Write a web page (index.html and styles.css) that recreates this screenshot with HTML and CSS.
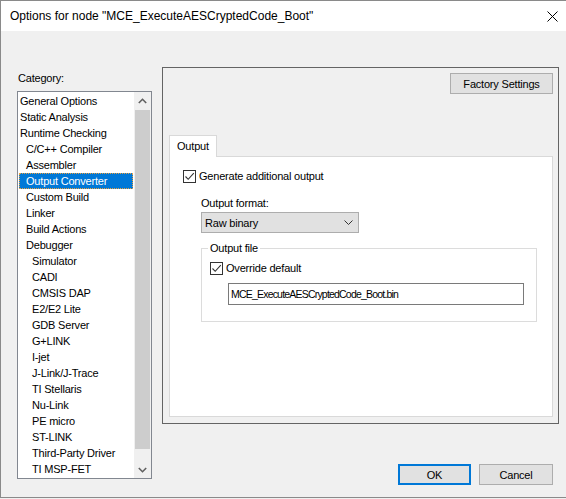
FILE: index.html
```html
<!DOCTYPE html>
<html>
<head>
<meta charset="utf-8">
<link rel="stylesheet" href="styles.css">
</head>
<body>
<div class="window">
  <div class="titlebar">
    <span class="title">Options for node "MCE_ExecuteAESCryptedCode_Boot"</span>
    <svg class="close" width="11" height="11" viewBox="0 0 11 11"><path d="M0.5 0.5 L10.5 10.5 M10.5 0.5 L0.5 10.5" stroke="#000" stroke-width="1" fill="none"/></svg>
  </div>
  <div class="content">
    <div class="leftcol">
      <div class="cat-label">Category:</div>
      <div class="listbox">
        <ul class="items">
          <li class="l0">General Options</li>
          <li class="l0">Static Analysis</li>
          <li class="l0">Runtime Checking</li>
          <li class="l1">C/C++ Compiler</li>
          <li class="l1">Assembler</li>
          <li class="l1 selected">Output Converter</li>
          <li class="l1">Custom Build</li>
          <li class="l1">Linker</li>
          <li class="l1">Build Actions</li>
          <li class="l1">Debugger</li>
          <li class="l2">Simulator</li>
          <li class="l2">CADI</li>
          <li class="l2">CMSIS DAP</li>
          <li class="l2">E2/E2 Lite</li>
          <li class="l2">GDB Server</li>
          <li class="l2">G+LINK</li>
          <li class="l2">I-jet</li>
          <li class="l2">J-Link/J-Trace</li>
          <li class="l2">TI Stellaris</li>
          <li class="l2">Nu-Link</li>
          <li class="l2">PE micro</li>
          <li class="l2">ST-LINK</li>
          <li class="l2">Third-Party Driver</li>
          <li class="l2">TI MSP-FET</li>
        </ul>
        <div class="scrollbar">
          <div class="arrow"><svg width="9" height="6" viewBox="0 0 9 6"><path d="M0.8 5 L4.5 1.3 L8.2 5" stroke="#606060" stroke-width="1.6" fill="none"/></svg></div>
          <div class="track"><div class="thumb"></div></div>
          <div class="arrow"><svg width="9" height="6" viewBox="0 0 9 6"><path d="M0.8 1 L4.5 4.7 L8.2 1" stroke="#606060" stroke-width="1.6" fill="none"/></svg></div>
        </div>
      </div>
    </div>
    <div class="rightcol">
      <div class="panel">
        <div class="panel-top"><div class="btn factory">Factory Settings</div></div>
        <div class="tabs">
          <div class="tabstrip"><div class="tab">Output</div></div>
          <div class="tabpage">
            <div class="check-row first">
              <span class="checkbox"><svg width="11" height="11" viewBox="0 0 11 11"><path d="M1.5 5.5 L4.2 8.3 L9.8 2.2" stroke="#333" stroke-width="1.1" fill="none"/></svg></span>
              <span class="check-label">Generate additional output</span>
            </div>
            <div class="format-label">Output format:</div>
            <div class="select">
              <span>Raw binary</span>
              <svg width="9" height="5" viewBox="0 0 9 5"><path d="M0.5 0.5 L4.5 4.5 L8.5 0.5" stroke="#333" stroke-width="1" fill="none"/></svg>
            </div>
            <div class="group">
              <span class="group-label">Output file</span>
              <div class="check-row inner">
                <span class="checkbox"><svg width="11" height="11" viewBox="0 0 11 11"><path d="M1.5 5.5 L4.2 8.3 L9.8 2.2" stroke="#333" stroke-width="1.1" fill="none"/></svg></span>
                <span class="check-label">Override default</span>
              </div>
              <div class="textbox">MCE_ExecuteAESCryptedCode_Boot.bin</div>
            </div>
          </div>
        </div>
      </div>
      <div class="dialog-buttons">
        <div class="btn ok">OK</div>
        <div class="btn cancel">Cancel</div>
      </div>
    </div>
  </div>
</div>
</body>
</html>
```

FILE: styles.css
```css
html, body {
  margin: 0;
  padding: 0;
}
body {
  width: 566px;
  height: 499px;
  overflow: hidden;
  background: #f0f0f0;
  font-family: "Liberation Sans", Arial, sans-serif;
  font-size: 11px;
  letter-spacing: -0.2px;
  color: #000;
}
.window {
  box-sizing: border-box;
  width: 567px;
  height: 498px;
  border: 1px solid #8a8a8a;
  border-right: none;
  background: #f0f0f0;
}
.titlebar {
  height: 30px;
  background: #fff;
  display: flex;
  align-items: center;
  padding-left: 9px;
  padding-right: 9px;
  justify-content: space-between;
}
.title {
  font-size: 12px;
  letter-spacing: 0;
  color: #000;
}
.close {
  display: block;
}
.content {
  display: flex;
  align-items: flex-start;
  padding-left: 16px;
}
.leftcol {
  margin-top: 40px;
  width: 135px;
}
.cat-label {
  line-height: 14px;
  height: 14px;
  margin-bottom: 6px;
  padding-left: 1px;
}
.listbox {
  box-sizing: border-box;
  width: 135px;
  height: 388px;
  border: 1px solid #828790;
  background: #fff;
  display: flex;
}
.items {
  list-style: none;
  margin: 0;
  padding: 1px 0 0 1px;
  width: 115px;
}
.items li {
  box-sizing: border-box;
  width: 114px;
  height: 16px;
  line-height: 16px;
  white-space: nowrap;
}
.items .l0 { padding-left: 1px; }
.items .l1 { padding-left: 7px; }
.items .l2 { padding-left: 13px; }
.items li.selected {
  background: #0078d7;
  color: #fff;
  outline: 1px dotted #e8a040;
  outline-offset: -1px;
}
.scrollbar {
  width: 17px;
  height: 386px;
  display: flex;
  flex-direction: column;
  background: #f0f0f0;
}
.arrow {
  height: 17px;
  display: flex;
  align-items: center;
  justify-content: center;
}
.arrow svg { display: block; }
.track {
  flex: 1;
  padding: 1px 1px 0 1px;
}
.thumb {
  height: 339px;
  background: #cdcdcd;
}
.rightcol {
  margin-left: 10px;
  margin-top: 36px;
  width: 397px;
}
.panel {
  box-sizing: border-box;
  width: 397px;
  height: 357px;
  border: 1px solid #646464;
}
.panel-top {
  display: flex;
  justify-content: flex-end;
  padding: 5px 5px 0 0;
}
.btn {
  box-sizing: border-box;
  height: 21px;
  border: 1px solid #adadad;
  background: #e1e1e1;
  display: flex;
  align-items: center;
  justify-content: center;
  font-size: 11px;
}
.factory {
  width: 103px;
}
.tabs {
  margin-top: 41px;
  margin-left: 6px;
  width: 384px;
}
.tabstrip {
  display: flex;
  height: 21px;
  position: relative;
  z-index: 1;
}
.tab {
  box-sizing: border-box;
  width: 48px;
  height: 22px;
  border: 1px solid #d9d9d9;
  border-bottom: none;
  background: #fff;
  padding-left: 7px;
  line-height: 20px;
}
.tabpage {
  box-sizing: border-box;
  width: 384px;
  height: 261px;
  border: 1px solid #d9d9d9;
  background: #fff;
  padding-left: 13px;
  padding-top: 13px;
}
.check-row {
  display: flex;
  align-items: center;
  height: 13px;
}
.checkbox {
  box-sizing: border-box;
  width: 13px;
  height: 13px;
  border: 1px solid #333;
  background: #fff;
  display: flex;
  align-items: center;
  justify-content: center;
}
.checkbox svg { display: block; }
.check-label {
  margin-left: 3px;
  line-height: 13px;
}
.format-label {
  margin-top: 13px;
  margin-left: 18px;
  line-height: 14px;
}
.select {
  box-sizing: border-box;
  margin-top: 2px;
  margin-left: 18px;
  width: 158px;
  height: 21px;
  border: 1px solid #adadad;
  background: #e1e1e1;
  display: flex;
  align-items: center;
  justify-content: space-between;
  padding-left: 3px;
  padding-right: 5px;
}
.select svg { display: block; }
.group {
  box-sizing: border-box;
  position: relative;
  margin-top: 15px;
  margin-left: 18px;
  width: 336px;
  height: 74px;
  border: 1px solid #dcdcdc;
  padding-left: 8px;
  padding-top: 13px;
}
.group-label {
  position: absolute;
  left: 6px;
  top: -8px;
  background: #fff;
  padding: 0 2px;
  line-height: 14px;
}
.textbox {
  box-sizing: border-box;
  margin-top: 8px;
  margin-left: 18px;
  width: 296px;
  height: 22px;
  border: 1px solid #7a7a7a;
  background: #fff;
  padding-left: 2px;
  line-height: 20px;
  font-size: 10.5px;
  letter-spacing: -0.8px;
}
.dialog-buttons {
  display: flex;
  justify-content: flex-end;
  gap: 8px;
  margin-top: 40px;
  padding-right: 6px;
}
.ok {
  width: 73px;
  border: 2px solid #0078d7;
}
.cancel {
  width: 74px;
}
```
